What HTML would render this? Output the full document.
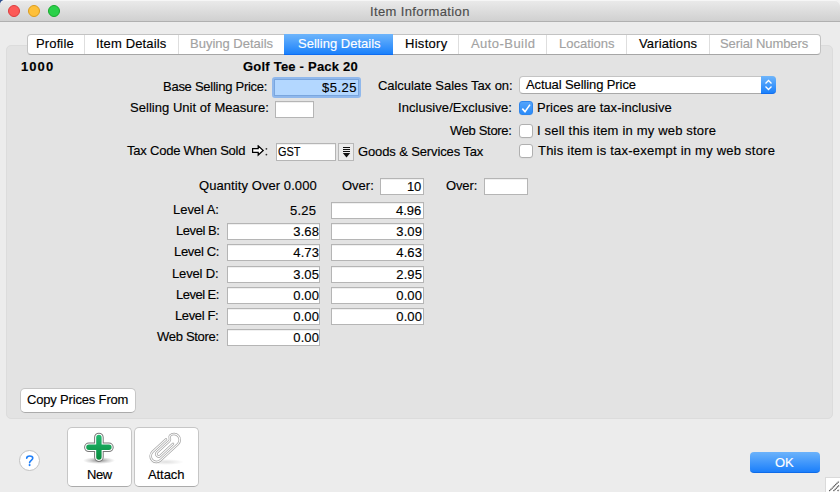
<!DOCTYPE html>
<html><head><meta charset="utf-8">
<style>
*{box-sizing:border-box;margin:0;padding:0}
html,body{width:840px;height:492px;overflow:hidden;background:#ececec}
body{position:relative;font-family:"Liberation Sans",sans-serif;font-size:13px;color:#000}
.a{-webkit-text-stroke:0.15px currentColor}
.a{position:absolute;white-space:nowrap;line-height:15px}
#wall1{position:absolute;left:0;top:0;width:8px;height:8px;background:#2f4f8f}
#wall2{position:absolute;right:0;top:0;width:8px;height:8px;background:#f4f4f4}
#title{position:absolute;left:0;top:0;width:840px;height:22px;background:linear-gradient(#ebebeb,#d0d0d0);border-bottom:1px solid #b0b0b0;border-radius:5px 5px 0 0;box-shadow:inset 0 1px 0 #f6f6f6}
.tl{position:absolute;top:5px;width:12px;height:12px;border-radius:50%}
#panel{position:absolute;left:6px;top:45px;width:827px;height:374px;background:#e3e3e3;border:1px solid #dcdcdc;border-radius:5px}
#tabs{position:absolute;left:27px;top:34px;width:794px;height:21px;background:#fff;border:1px solid #c3c3c3;border-bottom-color:#a6a6a6;border-radius:4px;overflow:hidden}
.dv{position:absolute;top:0;width:1px;height:19px;background:#dedede}
#sel{position:absolute;left:284px;top:34px;width:109px;height:21px;background:linear-gradient(#6eb5fb,#1b81fb);border-bottom:1px solid #0f6cf0}
.inp{position:absolute;background:#fff;border:1px solid #b5b5b5;box-shadow:inset 0 1px 0 #f0f0f0}
.cb{position:absolute;left:519px;width:14px;height:14px;background:#fff;border:1px solid #b0b0b0;border-radius:3px;box-shadow:0 .5px 0 rgba(0,0,0,.05)}
.btn{position:absolute;background:#fff;border:1px solid #c6c6c6;border-bottom-color:#ababab;border-radius:5px}
</style></head><body>
<div id="wall1"></div><div id="wall2"></div>
<div id="title">
  <div class="tl" style="left:8px;background:#fd5a57;border:1px solid #dc3d3e"></div>
  <div class="tl" style="left:28px;background:#fec03a;border:1px solid #dc9c1c"></div>
  <div class="tl" style="left:48px;background:#2bd14a;border:1px solid #16a92c"></div>
</div>

<div id="panel"></div>

<div id="tabs">
  <div class="dv" style="left:56px"></div>
  <div class="dv" style="left:150px"></div>
  <div class="dv" style="left:430px"></div>
  <div class="dv" style="left:518px"></div>
  <div class="dv" style="left:598px"></div>
  <div class="dv" style="left:681px"></div>
</div>
<div id="sel"></div>

<!-- base selling price focused -->
<div style="position:absolute;left:272px;top:77px;width:89px;height:21px;border-radius:3px;background:#90b8ec"></div>
<div class="inp" style="left:274px;top:79px;width:85px;height:17px;background:#b3d7ff;border-color:#7aa6de;box-shadow:none"></div>

<!-- popup -->
<div style="position:absolute;left:519px;top:76px;width:257px;height:18px;background:#fff;border:1px solid #c4c4c4;border-bottom-color:#a9a9a9;border-radius:4px"></div>
<div style="position:absolute;left:761px;top:76px;width:15px;height:18px;background:linear-gradient(#6eb5fb,#1b81fb);border-radius:0 4px 4px 0;border-bottom:1px solid #116ef0">
  <svg width="15" height="18" style="position:absolute;left:0;top:0"><path d="M4.5 7.5 L7.5 4.5 L10.5 7.5 M4.5 10.5 L7.5 13.5 L10.5 10.5" fill="none" stroke="#fff" stroke-width="1.3"/></svg>
</div>

<!-- unit of measure -->
<div class="inp" style="left:275px;top:101px;width:39px;height:17px"></div>

<!-- checkboxes -->
<div class="cb" style="top:101px;background:linear-gradient(#53a3fa,#2b8bf8);border-color:#2f86ec">
  <svg width="14" height="14" style="position:absolute;left:-1px;top:-1px"><path d="M3.3 7.6 L6 10.6 L11 3.6" fill="none" stroke="#fff" stroke-width="1.6"/></svg>
</div>
<div class="cb" style="top:124px"></div>
<div class="cb" style="top:144px"></div>

<!-- tax code -->
<svg width="18" height="12" style="position:absolute;left:252px;top:145px"><path d="M0.6 3.6 H6.2 V0.9 L11.2 5.45 L6.2 10 V7.3 H0.6 Z" fill="#fff" stroke="#000" stroke-width="1.25" stroke-linejoin="miter"/><circle cx="14.4" cy="3.8" r="0.9" fill="#333"/><circle cx="14.4" cy="9.6" r="0.9" fill="#333"/></svg>
<div class="inp" style="left:276px;top:143px;width:60px;height:18px"></div>
<div style="position:absolute;left:338px;top:143px;width:16px;height:18px;background:#ececec;border:1px solid #b8b8b8">
  <svg width="14" height="16" style="position:absolute;left:0;top:0"><path d="M4 3.5 H11 M4 5.5 H11 M4 7.5 H11" stroke="#111" stroke-width="1"/><path d="M3.8 9 H11.2 L7.5 13.5 Z" fill="#111"/></svg>
</div>

<!-- over inputs -->
<div class="inp" style="left:380px;top:178px;width:44px;height:17px"></div>
<div class="inp" style="left:484px;top:178px;width:44px;height:17px"></div>

<!-- level inputs -->
<div class="inp" style="left:331px;top:202px;width:93px;height:17px"></div>
<div class="inp" style="left:227px;top:223px;width:93px;height:17px"></div>
<div class="inp" style="left:331px;top:223px;width:93px;height:17px"></div>
<div class="inp" style="left:227px;top:244px;width:93px;height:17px"></div>
<div class="inp" style="left:331px;top:244px;width:93px;height:17px"></div>
<div class="inp" style="left:227px;top:266px;width:93px;height:17px"></div>
<div class="inp" style="left:331px;top:266px;width:93px;height:17px"></div>
<div class="inp" style="left:227px;top:287px;width:93px;height:17px"></div>
<div class="inp" style="left:331px;top:287px;width:93px;height:17px"></div>
<div class="inp" style="left:227px;top:308px;width:93px;height:17px"></div>
<div class="inp" style="left:331px;top:308px;width:93px;height:17px"></div>
<div class="inp" style="left:227px;top:329px;width:93px;height:17px"></div>

<!-- copy prices -->
<div class="btn" style="left:20px;top:388px;width:116px;height:25px"></div>

<!-- bottom -->
<div style="position:absolute;left:19px;top:450px;width:21px;height:21px;border-radius:50%;background:#fff;border:1px solid #c2c2c2"></div>
<svg width="21" height="21" style="position:absolute;left:19px;top:450px"><path d="M7.7 8.3 C7.7 5.2 13.8 5.2 13.8 8.1 C13.8 10.2 10.6 10.4 10.6 12.8" fill="none" stroke="#1f7ff8" stroke-width="1.6" stroke-linecap="round"/><circle cx="10.6" cy="15.1" r="1.05" fill="#1f7ff8"/></svg>

<div class="btn" style="left:67px;top:427px;width:65px;height:60px"></div>
<div class="btn" style="left:134px;top:427px;width:65px;height:60px"></div>

<!-- plus icon -->
<div style="position:absolute;left:83px;top:457px;width:32px;height:7px;border-radius:50%;background:radial-gradient(closest-side,rgba(0,0,0,.45),rgba(0,0,0,.15) 60%,rgba(0,0,0,0))"></div>
<svg width="40" height="40" style="position:absolute;left:80px;top:428px">
  <defs><linearGradient id="g" gradientUnits="userSpaceOnUse" x1="0" y1="6" x2="0" y2="32"><stop offset="0" stop-color="#22bb72"/><stop offset="1" stop-color="#07893a"/></linearGradient></defs>
  <g stroke-linecap="round" fill="none">
    <path d="M8.9 19.3 H28.9 M18.9 9.5 V29.1" stroke="#777" stroke-width="9.6"/>
    <path d="M8.9 19.3 H28.9 M18.9 9.5 V29.1" stroke="#fff" stroke-width="7.6"/>
    <path d="M8.9 19.3 H28.9 M18.9 9.5 V29.1" stroke="url(#g)" stroke-width="5.4"/>
  </g>
</svg>

<!-- paperclip -->
<div style="position:absolute;left:148px;top:459px;width:36px;height:6px;border-radius:50%;background:radial-gradient(closest-side,rgba(0,0,0,.12),rgba(0,0,0,0))"></div>
<svg width="40" height="40" style="position:absolute;left:144px;top:428px">
  <g transform="translate(21.2 20) rotate(-43)" fill="none" stroke-linecap="round">
    <path d="M6.5 -5.8 H-12 A5.8 5.8 0 0 0 -12 5.8 H12 A5.8 5.8 0 0 0 12 -5.8 C10.3 -5.8 10 -2.3 8 -2.3 H-9 A2.3 2.3 0 0 0 -9 2.3 H8.5" stroke="#a4a4a4" stroke-width="2.5"/>
    <path d="M6.5 -5.8 H-12 A5.8 5.8 0 0 0 -12 5.8 H12 A5.8 5.8 0 0 0 12 -5.8 C10.3 -5.8 10 -2.3 8 -2.3 H-9 A2.3 2.3 0 0 0 -9 2.3 H8.5" stroke="#fff" stroke-width="1.1"/>
  </g>
</svg>

<!-- OK -->
<div style="position:absolute;left:750px;top:452px;width:70px;height:21px;border-radius:4px;background:linear-gradient(#6cb3fb,#1b7ffb);border-bottom:1px solid #0e6be8"></div>

<!-- grip -->
<div style="position:absolute;left:825px;top:477px;width:15px;height:15px;background:#fff;border-left:1px solid #dadada;border-top:1px solid #dadada">
  <svg width="15" height="15" style="position:absolute;left:-1px;top:-1px"><path d="M4.3 14 L14 4.3 M8.5 14 L14 8.5 M12.6 14 L14 12.6" stroke="#4a4a4a" stroke-width="1.3" stroke-dasharray="1.2 0.5"/></svg>
</div>

<div class="a" style="left:370.00px;top:4px;letter-spacing:0.367px;color:#4d4d4d">Item Information</div>
<div class="a" style="left:36.00px;top:36px;letter-spacing:0.133px;">Profile</div>
<div class="a" style="left:96.00px;top:36px;letter-spacing:0.155px;">Item Details</div>
<div class="a" style="left:190.00px;top:36px;letter-spacing:0.0px;color:#a2a2a2">Buying Details</div>
<div class="a" style="left:298.00px;top:36px;letter-spacing:0.015px;color:#fff">Selling Details</div>
<div class="a" style="left:405.00px;top:36px;letter-spacing:0.283px;">History</div>
<div class="a" style="left:471.00px;top:36px;letter-spacing:0.444px;color:#a2a2a2">Auto-Build</div>
<div class="a" style="left:559.00px;top:36px;letter-spacing:-0.014px;color:#a2a2a2">Locations</div>
<div class="a" style="left:639.00px;top:36px;letter-spacing:0.133px;">Variations</div>
<div class="a" style="left:720.00px;top:36px;letter-spacing:-0.109px;color:#a2a2a2">Serial Numbers</div>
<div class="a" style="left:21.00px;top:59px;letter-spacing:1.066px;font-weight:bold">1000</div>
<div class="a" style="left:243.00px;top:59px;letter-spacing:0.219px;font-weight:bold">Golf Tee - Pack 20</div>
<div class="a" style="left:163.00px;top:79px;letter-spacing:-0.26px;">Base Selling Price:</div>
<div class="a" style="left:322.00px;top:80px;letter-spacing:0.475px;">$5.25</div>
<div class="a" style="left:378.00px;top:78px;letter-spacing:-0.045px;">Calculate Sales Tax on:</div>
<div class="a" style="left:526.00px;top:77px;letter-spacing:-0.105px;">Actual Selling Price</div>
<div class="a" style="left:130.00px;top:100px;letter-spacing:0.035px;">Selling Unit of Measure:</div>
<div class="a" style="left:398.00px;top:100px;letter-spacing:0.065px;">Inclusive/Exclusive:</div>
<div class="a" style="left:537.00px;top:100px;letter-spacing:0.048px;">Prices are tax-inclusive</div>
<div class="a" style="left:450.00px;top:123px;letter-spacing:-0.333px;">Web Store:</div>
<div class="a" style="left:537.00px;top:123px;letter-spacing:0.18px;">I sell this item in my web store</div>
<div class="a" style="left:127.00px;top:143px;letter-spacing:-0.212px;">Tax Code When Sold</div>
<div class="a" style="left:278px;top:144px;transform:scaleX(0.84);transform-origin:0 0">GST</div>
<div class="a" style="left:358.00px;top:144px;letter-spacing:-0.126px;">Goods &amp; Services Tax</div>
<div class="a" style="left:538.00px;top:143px;letter-spacing:0.226px;">This item is tax-exempt in my web store</div>
<div class="a" style="left:199.00px;top:178px;letter-spacing:0.074px;">Quantity Over 0.000</div>
<div class="a" style="left:342.00px;top:178px;letter-spacing:0.0px;">Over:</div>
<div class="a" style="left:407.00px;top:179px;letter-spacing:-0.25px;">10</div>
<div class="a" style="left:446.00px;top:178px;letter-spacing:-0.125px;">Over:</div>
<div class="a" style="left:173.00px;top:202px;letter-spacing:-0.042px;">Level A:</div>
<div class="a" style="left:290.00px;top:203px;letter-spacing:0.234px;">5.25</div>
<div class="a" style="left:396.00px;top:203px;letter-spacing:0.0px;">4.96</div>
<div class="a" style="left:176.00px;top:223px;letter-spacing:-0.443px;">Level B:</div>
<div class="a" style="left:174.00px;top:244px;letter-spacing:-0.328px;">Level C:</div>
<div class="a" style="left:27.00px;top:392px;letter-spacing:-0.173px;">Copy Prices From</div>
<div class="a" style="left:87.00px;top:467px;letter-spacing:-0.45px;">New</div>
<div class="a" style="left:148.00px;top:467px;letter-spacing:-0.08px;">Attach</div>
<div class="a" style="left:775.00px;top:455px;letter-spacing:-0.1px;color:#fff">OK</div>
<div class="a" style="left:172.00px;top:266px;letter-spacing:-0.143px;">Level D:</div>
<div class="a" style="left:176.00px;top:287px;letter-spacing:-0.515px;">Level E:</div>
<div class="a" style="left:175.00px;top:308px;letter-spacing:-0.372px;">Level F:</div>
<div class="a" style="left:157.00px;top:329px;letter-spacing:-0.3px;">Web Store:</div>
<div class="a" style="left:293px;top:224px;width:26px;text-align:right;letter-spacing:0.1px;">3.68</div>
<div class="a" style="left:293px;top:245px;width:26px;text-align:right;letter-spacing:0.1px;">4.73</div>
<div class="a" style="left:293px;top:267px;width:26px;text-align:right;letter-spacing:0.1px;">3.05</div>
<div class="a" style="left:293px;top:288px;width:26px;text-align:right;letter-spacing:0.1px;">0.00</div>
<div class="a" style="left:293px;top:309px;width:26px;text-align:right;letter-spacing:0.1px;">0.00</div>
<div class="a" style="left:293px;top:330px;width:26px;text-align:right;letter-spacing:0.1px;">0.00</div>
<div class="a" style="left:396px;top:224px;width:26px;text-align:right;letter-spacing:0.1px;">3.09</div>
<div class="a" style="left:396px;top:245px;width:26px;text-align:right;letter-spacing:0.1px;">4.63</div>
<div class="a" style="left:396px;top:267px;width:26px;text-align:right;letter-spacing:0.1px;">2.95</div>
<div class="a" style="left:396px;top:288px;width:26px;text-align:right;letter-spacing:0.1px;">0.00</div>
<div class="a" style="left:396px;top:309px;width:26px;text-align:right;letter-spacing:0.1px;">0.00</div>
</body></html>
